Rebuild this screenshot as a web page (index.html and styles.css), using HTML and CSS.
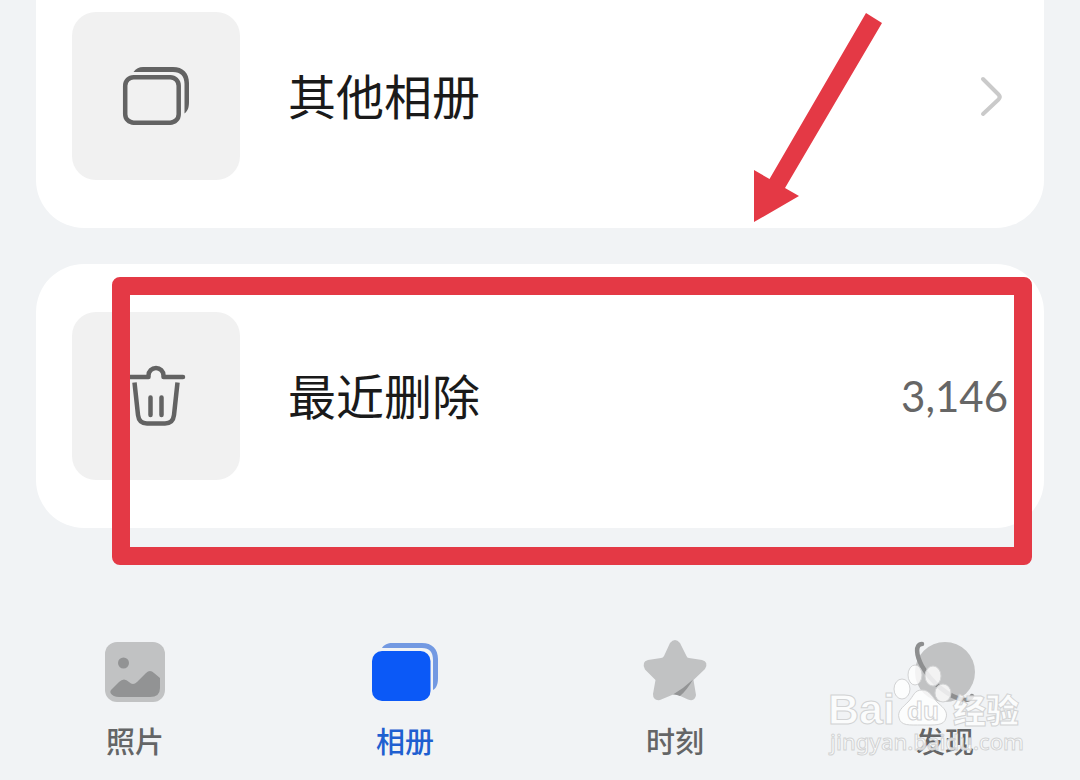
FILE: index.html
```html
<!DOCTYPE html>
<html lang="zh-CN">
<head>
<meta charset="UTF-8" />
<meta name="viewport" content="width=device-width, initial-scale=1">
<title>相册</title>
<link rel="stylesheet" href="styles.css">
</head>

<body>
<main>
	<section class="card first">
		<a class="row" href="#other">
			<span class="tile">
				<svg width="72" height="72" viewBox="0 0 72 72" fill="none" stroke="#636363" stroke-width="4.5">
					<rect x="5.2" y="17.2" width="53.5" height="45.5" rx="8.5"/>
					<path fill="#636363" stroke="none" d="M13.5 12C16 8.6 19 7 23 7H53C63 7 69 13 69 23V42C69 47 68 51 64.5 53.5V24C64.5 16 60.5 12 53 12Z"/>
				</svg>
			</span>
			<span class="name">其他相册</span>
			<svg class="chevron" width="24" height="42" viewBox="0 0 24 42" fill="none" stroke="#cacaca" stroke-width="4" stroke-linecap="round" stroke-linejoin="round">
				<path d="M3 4L18.5 19.5Q21 22 18.5 24.500L3 39"/>
			</svg>
		</a>
		<svg class="arrow" width="128" height="210" viewBox="0 0 128 210">
			<path fill="#e43945" d="M112 0L128 10L31 175L45 183L0 209V157L15.5 166Z"/>
		</svg>
	</section>

	<section class="card">
		<a class="row" href="#deleted">
			<span class="tile">
				<svg width="72" height="72" viewBox="0 0 72 72" fill="none" stroke="#636363" stroke-width="4.5" stroke-linecap="round" stroke-linejoin="round">
					<path d="M9 17H28.5V15.500a7.500 7.500 0 0 1 15 0V17H63"/>
					<path stroke-linecap="butt" d="M14.500 22.500L18 55Q19 63.500 27 63.500H45Q53 63.500 54 55L57.500 22.500"/>
					<path d="M30.500 37.500V55M41.500 37.500V55"/>
				</svg>
			</span>
			<span class="name">最近删除</span>
			<span class="count">3,146</span>
		</a>
		<div class="frame"></div>
	</section>
</main>

<nav>
	<a href="#photos">
		<svg width="72" height="72" viewBox="0 0 72 72">
			<rect x="6" y="6" width="60" height="60" rx="12" fill="#c1c2c3"/>
			<circle cx="24.5" cy="27" r="5.5" fill="#929394"/>
			<path fill="#929394" d="M12 54L20 46Q25 41 30 46Q34 50 38 46L47 37Q51 33 55 37L61 42V52Q61 61 51 61H20Q14 61 11.5 57Q11 55 12 54Z"/>
		</svg>
		<span>照片</span>
	</a>
	<a class="active" href="#albums">
		<svg width="72" height="72" viewBox="0 0 72 72">
			<rect x="3" y="15" width="58.5" height="50" rx="10" fill="#0b59f7"/>
			<path fill="#7399e2" d="M13 12C15 8.5 19 7 23 7H53C63 7 69 13 69 23V42C69 48 67.5 52 64 54V24C64 16 60.5 12 53 12Z"/>
		</svg>
		<span>相册</span>
	</a>
	<a href="#moments">
		<svg width="72" height="72" viewBox="0 0 72 72">
			<path fill="#c1c2c3" d="M31 7Q36 1 41 7L47.5 20Q48 22 50 22L63 24Q70 26 66 33L54.5 44L57 59Q56 66 49 63.5L39 59Q36 57.500 33 59L21 64Q14 65 14 58L16.500 44L6 33.500Q2 26 9 24L22 22Q24 22 25 20Z"/>
			<path fill="#939495" d="M54 43.5Q45 52 34 58.5Q37 58 41 60Q48 54 54 43.5Z"/>
		</svg>
		<span>时刻</span>
	</a>
	<a href="#discover">
		<svg width="72" height="72" viewBox="0 0 72 72">
			<circle cx="36" cy="36" r="30" fill="#c1c2c3"/>
			<path fill="none" stroke="#8d8e8f" stroke-width="4.5" stroke-linecap="round" d="M13 8C6 8 7 19 13 30C22 46 40 62 56 64Q61 64 63 60"/>
		</svg>
		<span>发现</span>
	</a>
	<svg class="watermark" width="200" height="100" viewBox="0 0 200 100">
		<g>
			<ellipse cx="74" cy="29" rx="8" ry="10"/>
			<ellipse cx="87" cy="15" rx="7" ry="10"/>
			<ellipse cx="105" cy="16" rx="8" ry="10"/>
			<ellipse cx="115" cy="33" rx="8" ry="9"/>
			<path d="M94 30C102 30 104 37 110 43C116 48 120 52 118 58C116 66 107 65 94 65C81 65 73 66 71 58C69 51 75 47 80 42C86 36 86 30 94 30Z"/>
		</g>
		<text class="logo" x="0" y="64">Bai</text>
		<text class="du" x="79" y="60">du</text>
		<text class="cn" x="125" y="63">经验</text>
		<text class="url" x="2" y="90">jingyan.baidu.com</text>
	</svg>
</nav>
</body>
</html>
```

FILE: styles.css
```css
body {
	margin: 0;
	background: #f1f3f5;
	font-family: "Noto Sans CJK SC", sans-serif;
}
a {
	color: inherit;
	text-decoration: none;
}
main {
	display: flex;
	flex-direction: column;
	gap: 36px;
	padding: 0 36px;
}
.card {
	position: relative;
	padding: 48px 36px;
	border-radius: 48px;
	background: #fff;
}
.card.first {
	padding-top: 12px;
	border-radius: 0 0 48px 48px;
}
.row {
	display: flex;
	align-items: center;
	gap: 48px;
}
.tile {
	display: flex;
	align-items: center;
	justify-content: center;
	width: 168px;
	height: 168px;
	border-radius: 24px;
	background: #f1f1f1;
}
.name {
	flex: 1;
	padding-bottom: 4px;
	color: #1a1a1a;
	font-size: 48px;
	line-height: 72px;
}
.chevron {
	margin-right: 4px;
}
.count {
	color: #666;
	font-family: Lato, sans-serif;
	font-size: 42px;
}
/* red markup */
.arrow {
	position: absolute;
	top: 13px;
	right: 162px;
}
.frame {
	position: absolute;
	top: 13px;
	right: 12px;
	bottom: -37px;
	left: 76px;
	border: 18px solid #e43945;
	border-radius: 8px;
}
/* tab bar */
nav {
	position: relative;
	display: grid;
	grid-template-columns: repeat(4, 1fr);
	padding: 108px 0 22px;
}
nav a {
	display: flex;
	flex-direction: column;
	align-items: center;
	gap: 14px;
	color: #646566;
	font-size: 29px;
	line-height: 36px;
	font-weight: 500;
}
nav .active {
	color: #1f5fd0;
}
.watermark {
	position: absolute;
	right: 52px;
	bottom: 20px;
	overflow: visible;
	fill: #fff;
	fill-opacity: .8;
	stroke: #d2d3d4;
	stroke-width: 1px;
}
.logo {
	font: bold 43px "Liberation Sans", sans-serif;
}
.du {
	font: bold 26px "Liberation Sans", sans-serif;
}
.cn {
	font: 900 33px "Noto Sans CJK SC", sans-serif;
}
.url {
	font: 500 22px "Noto Sans", sans-serif;
}
```
